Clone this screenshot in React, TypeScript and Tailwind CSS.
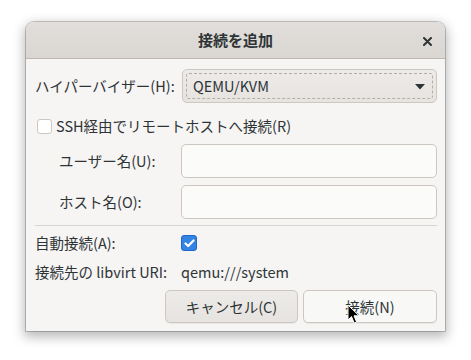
import React from "react";

const font = { fontFamily: '"Noto Sans CJK JP", "Noto Sans", sans-serif' };

function Cursor() {
  return (
    <svg className="absolute left-[347px] top-[304px]" width="13" height="21" viewBox="0 0 13 21">
      <path d="M1 1 L1 16 L4.5 12.6 L7.2 19 L9.6 18 L7 11.8 L12 11.8 Z" fill="#000" stroke="#fff" strokeWidth="1" strokeLinejoin="round" />
    </svg>
  );
}

export default function App() {
  return (
    <div className="relative w-[471px] h-[360px] bg-white text-[#2e3436] text-[14.5px]" style={font}>
      <div className="absolute left-[26px] top-[22px] w-[419px] h-[309px] flex flex-col rounded-t-[8px] bg-[#f6f5f4] shadow-[0_4px_12px_2px_rgba(0,0,0,0.28),0_0_0_1px_rgba(0,0,0,0.2)]">
        {/* Header */}
        <div className="relative h-[37px] flex items-center justify-center rounded-t-[8px] bg-gradient-to-b from-[#e1dedb] to-[#dad6d2] border-b border-[#bfb8b1]">
          <span className="font-bold text-[15px]">接続を追加</span>
          <svg className="absolute right-[13px] top-[15px]" width="9" height="9" viewBox="0 0 9 9">
            <path d="M1 1 L8 8 M8 1 L1 8" stroke="#2e3436" strokeWidth="2" strokeLinecap="round" />
          </svg>
        </div>

        {/* Body */}
        <div className="flex flex-col pl-[9px] pr-[8px] pt-[10px]">
          <div className="flex items-center h-[34px]">
            <span className="w-[147px] shrink-0 whitespace-nowrap">ハイパーバイザー(H):</span>
            <div className="relative flex-1 h-[34px] flex items-center pl-[10px] rounded-[5px] border border-[#cdc7c2] bg-gradient-to-b from-[#edebe9] to-[#e6e3e0]">
              <div className="absolute inset-[3px] rounded-[3px] border border-dashed border-[#b3aea9]" />
              <span>QEMU/KVM</span>
              <svg className="absolute right-[11px] top-[14px]" width="10" height="6" viewBox="0 0 10 6">
                <path d="M0 0 L10 0 L5 5.5 Z" fill="#2e3436" />
              </svg>
            </div>
          </div>

          <div className="flex items-center h-[16px] mt-[15px] ml-[2px] gap-[4px]">
            <div className="w-[15px] h-[15px] rounded-[3px] border border-[#cdc7c2] bg-white" />
            <span className="whitespace-nowrap">SSH経由でリモートホストへ接続(R)</span>
          </div>

          <div className="flex items-center h-[34px] mt-[10px]">
            <span className="w-[146px] shrink-0 pl-[24px] whitespace-nowrap">ユーザー名(U):</span>
            <div className="flex-1 h-[34px] rounded-[5px] border border-[#cdc7c2] bg-[#fbfbfa]" />
          </div>
          <div className="flex items-center h-[34px] mt-[7px]">
            <span className="w-[146px] shrink-0 pl-[24px] whitespace-nowrap">ホスト名(O):</span>
            <div className="flex-1 h-[34px] rounded-[5px] border border-[#cdc7c2] bg-[#fbfbfa]" />
          </div>

          <div className="h-px bg-[#d8d4d0] mt-[6px]" />

          <div className="flex items-center h-[16px] mt-[9px]">
            <span className="w-[146px] shrink-0 whitespace-nowrap">自動接続(A):</span>
            <div className="w-[16px] h-[16px] rounded-[3px] bg-[#3584e4] border border-[#1b6acb] flex items-center justify-center">
              <svg width="11" height="9" viewBox="0 0 11 9">
                <path d="M1.5 4.5 L4.2 7 L9.5 1.5" stroke="#fff" strokeWidth="2.2" fill="none" strokeLinecap="round" strokeLinejoin="round" />
              </svg>
            </div>
          </div>

          <div className="flex items-center h-[20px] mt-[11px]">
            <span className="w-[146px] shrink-0 whitespace-nowrap">接続先の libvirt URI:</span>
            <span>qemu:///system</span>
          </div>

          <div className="flex justify-end gap-[5px] mt-[8px]">
            <button className="w-[133px] h-[33px] rounded-[5px] border border-[#cdc7c2] bg-gradient-to-b from-[#edebe9] to-[#e6e3e0] shadow-[0_1px_0_rgba(0,0,0,0.05)]">
              キャンセル(C)
            </button>
            <button className="w-[134px] h-[33px] rounded-[5px] border border-[#cdc7c2] bg-[#f8f8f7] shadow-[0_1px_0_rgba(0,0,0,0.05)]">
              接続(N)
            </button>
          </div>
        </div>
      </div>
      <Cursor />
    </div>
  );
}
